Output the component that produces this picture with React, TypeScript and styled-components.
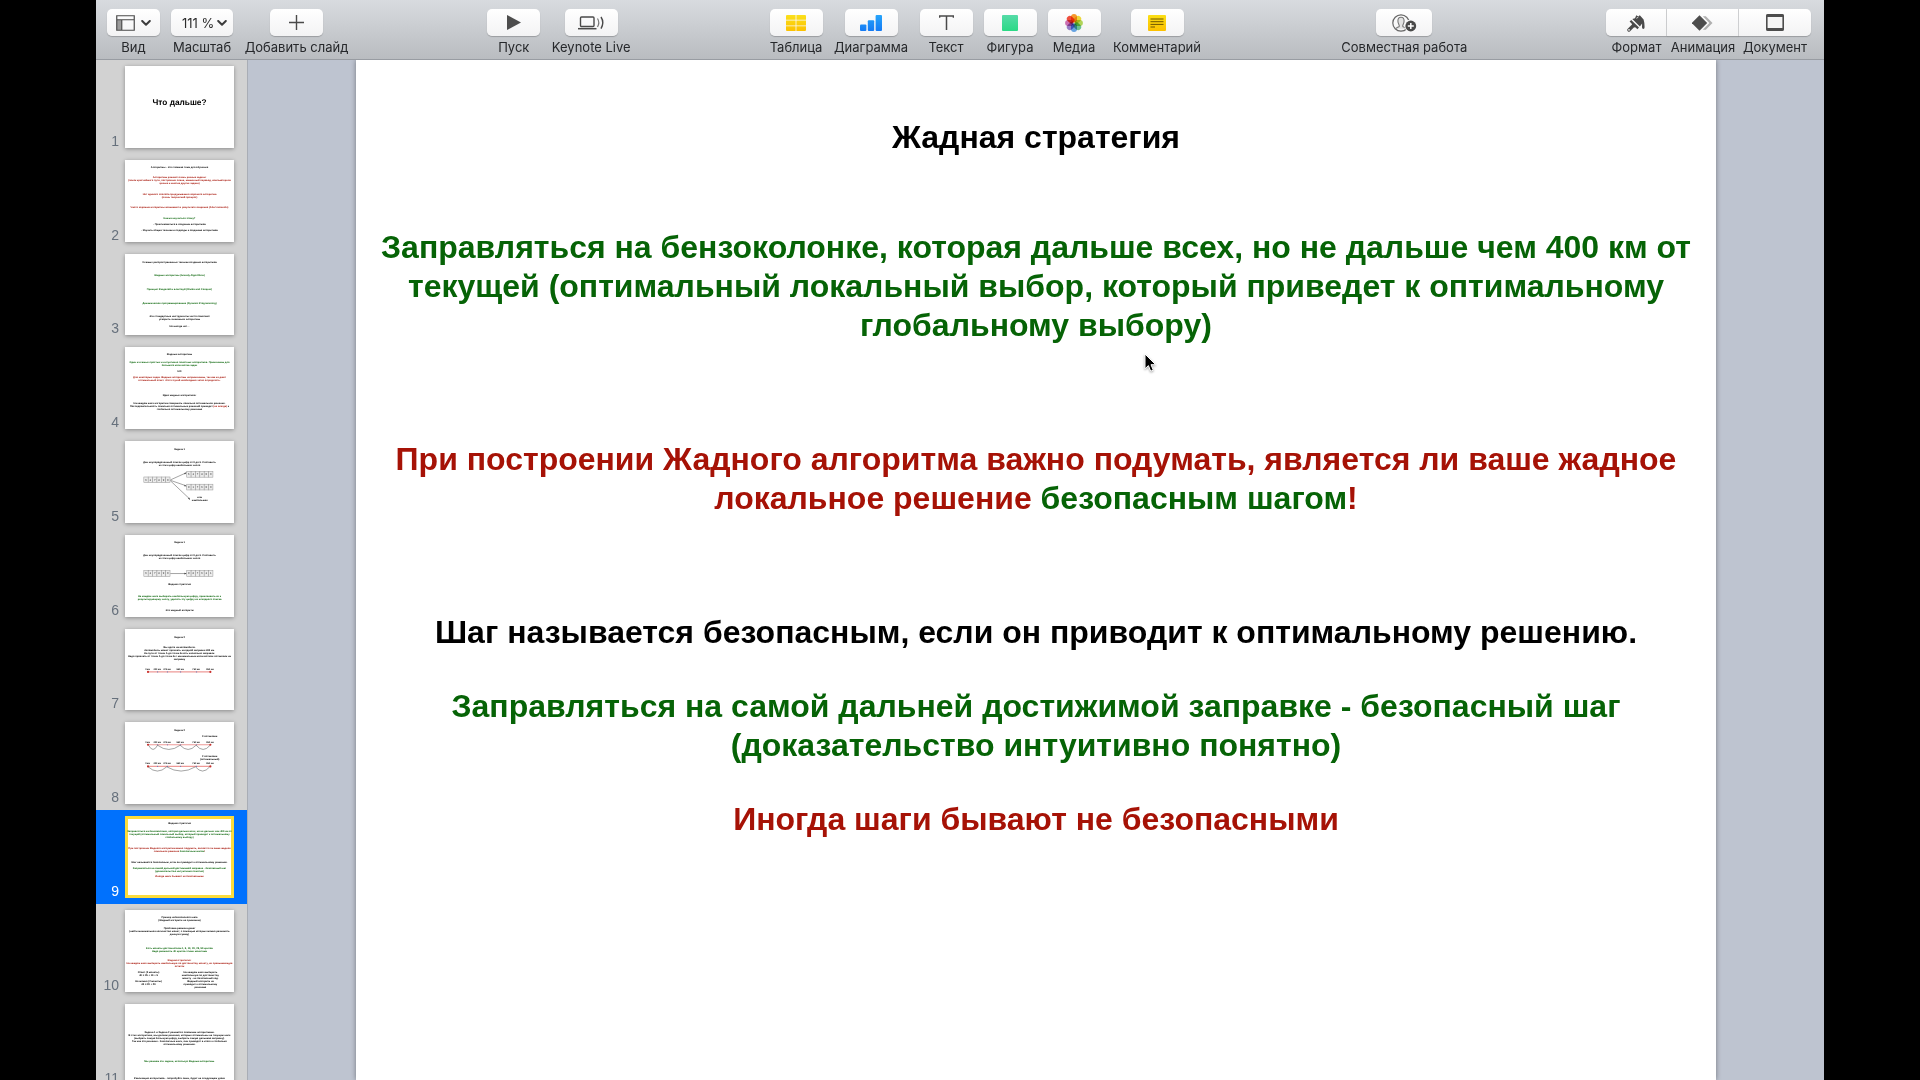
import React from 'react';
import styled, { createGlobalStyle, css } from 'styled-components';

const GREEN = '#066306';
const RED = '#a61206';
const BLACK = '#000000';
const SLIDE_FONT = '"Liberation Sans", Arial, sans-serif';
const UI_FONT = 'Inter, "Liberation Sans", sans-serif';

const GlobalStyle = createGlobalStyle`
  * { box-sizing: border-box; }
  body { margin: 0; background: #000; }
`;

const Screen = styled.div`
  height: 100vh;
  padding: 0 5%;
  background: #000;
  overflow: hidden;
`;

const Window = styled.div`
  height: 100%;
  display: flex;
  flex-direction: column;
  font-family: ${UI_FONT};
`;

/* ---------- toolbar ---------- */

const Toolbar = styled.header`
  flex: none;
  display: flex;
  justify-content: space-between;
  align-items: flex-start;
  height: 60px;
  padding: 9px 13px 0 11px;
  background: linear-gradient(#d8dbdf, #b9bcc0);
  border-bottom: 1px solid #989ca2;
`;

const ToolGroup = styled.div`
  display: flex;
  gap: 11px;
`;

const ToolItem = styled.div<{ $width: number }>`
  width: ${(p) => p.$width}px;
  display: flex;
  flex-direction: column;
  align-items: center;
  gap: 3px;
`;

const face = css`
  height: 27px;
  padding: 0;
  border: 0;
  border-radius: 5px;
  background: linear-gradient(#ffffff, #f3f3f4);
  box-shadow: 0 1px 1px rgba(0, 0, 0, 0.22);
  color: #4a4a4a;
`;

const ToolButton = styled.button<{ $width?: number }>`
  ${face}
  width: ${(p) => p.$width ?? 53}px;
  display: flex;
  align-items: center;
  justify-content: center;
  gap: 6px;
`;

const ToolLabel = styled.label`
  font-size: 13px;
  line-height: 16px;
  color: #26282b;
  white-space: nowrap;
`;

const ZoomFace = styled.div`
  position: relative;
  width: 62px;
  svg { position: absolute; right: 6px; top: 11px; pointer-events: none; }
`;

const ZoomSelect = styled.select`
  ${face}
  width: 100%;
  padding: 0 0 0 11px;
  appearance: none;
  font: 13px ${UI_FONT};
  color: #2c2c2c;
`;

const Segments = styled.div`
  display: flex;
`;

const Segment = styled(ToolButton)<{ $edge?: 'first' | 'last' }>`
  width: 100%;
  border-radius: ${(p) => (p.$edge === 'first' ? '5px 0 0 5px' : p.$edge === 'last' ? '0 5px 5px 0' : '0')};
  border-right: ${(p) => (p.$edge === 'last' ? '0' : '1px solid #d3d4d6')};
`;

const Chevron = () => (
  <svg width="10" height="6" viewBox="0 0 10 6" fill="none" stroke="#3c3c3c" strokeWidth="2" strokeLinecap="round" strokeLinejoin="round">
    <path d="M1.2 1 5 4.8 8.8 1" />
  </svg>
);

const ViewIcon = () => (
  <svg width="19" height="16" viewBox="0 0 19 16">
    <rect x="1" y="5" width="4.5" height="10" fill="#9b9b9b" />
    <path d="M.75 .75h17.5v14.5H.75zM.75 4.75h17.5M5.75 4.75v10.5" fill="none" stroke="#4a4a4a" strokeWidth="1.2" />
  </svg>
);

const PlusIcon = () => (
  <svg width="15" height="15" viewBox="0 0 15 15" stroke="#4a4a4a" strokeWidth="1.4">
    <path d="M7.5 0v15M0 7.5h15" />
  </svg>
);

const PlayIcon = () => (
  <svg width="14" height="15" viewBox="0 0 14 15">
    <path d="M0 0 14 7.5 0 15z" fill="#4d4d4d" />
  </svg>
);

const LiveIcon = () => (
  <svg width="27" height="14" viewBox="0 0 27 14" fill="none" stroke="#4a4a4a">
    <rect x="2.5" y="1" width="13.5" height="9.5" rx="1" strokeWidth="1.4" />
    <path d="M0 12.7h18.5" strokeWidth="1.5" />
    <path d="M19.5 2.5q2.600 4 0 8.500" strokeWidth="1.200" stroke="#777" />
    <path d="M23 1q3.6 5.6 0 11.6" strokeWidth="1.4" />
  </svg>
);

const TableIcon = () => (
  <svg width="20" height="16" viewBox="0 0 20 16">
    <defs>
      <linearGradient id="gold" x1="0" y1="0" x2="0" y2="16" gradientUnits="userSpaceOnUse">
        <stop offset="0" stopColor="#fbe01c" />
        <stop offset="1" stopColor="#fcc100" />
      </linearGradient>
    </defs>
    <path
      fill="url(#gold)"
      d="M1 0h8.6v4.8H0V1a1 1 0 0 1 1-1zM10.4 0H19a1 1 0 0 1 1 1v3.8h-9.6zM0 5.6h9.6v4.8H0zM10.4 5.6H20v4.8h-9.6zM0 11.2h9.6V16H1a1 1 0 0 1-1-1zM10.4 11.2H20V15a1 1 0 0 1-1 1h-8.6z"
    />
  </svg>
);

const ChartIcon = () => (
  <svg width="22" height="16" viewBox="0 0 22 16">
    <defs>
      <linearGradient id="blue" x1="0" y1="0" x2="0" y2="16" gradientUnits="userSpaceOnUse">
        <stop offset="0" stopColor="#27a5fb" />
        <stop offset="1" stopColor="#147af4" />
      </linearGradient>
    </defs>
    <g fill="url(#blue)">
      <rect y="9.5" width="6.4" height="6.5" rx="1" />
      <rect x="7.8" y="5.2" width="6.4" height="10.8" rx="1" />
      <rect x="15.6" width="6.4" height="16" rx="1" />
    </g>
  </svg>
);

const TextIcon = () => (
  <svg width="15" height="15" viewBox="0 0 15 15" fill="none" stroke="#4a4a4a" strokeWidth="1.5">
    <path d="M0 .9h15M7.5 .9V15M.6 .5v2.2M14.4 .5v2.2" />
  </svg>
);

const ShapeIcon = () => (
  <svg width="16" height="16" viewBox="0 0 16 16">
    <defs>
      <linearGradient id="mint" x1="0" y1="0" x2="0" y2="1">
        <stop offset="0" stopColor="#56dba8" />
        <stop offset="1" stopColor="#2bd985" />
      </linearGradient>
    </defs>
    <rect width="16" height="16" rx="1" fill="url(#mint)" />
  </svg>
);

const PETALS = ['#f99a2c', '#f0dc3c', '#b4d95a', '#6cc795', '#6aa9ea', '#9a80cc', '#d070b4', '#f2503e'];

const PhotosIcon = () => (
  <svg width="18" height="18" viewBox="0 0 18 18">
    {PETALS.map((color, i) => (
      <rect
        key={color}
        x="6"
        y="0.1"
        width="6"
        height="8.300"
        rx="3"
        fill={color}
        transform={`rotate(${i * 45} 9 9)`}
        style={{ mixBlendMode: 'multiply' }}
      />
    ))}
  </svg>
);

const CommentIcon = () => (
  <svg width="18" height="16" viewBox="0 0 18 16">
    <defs>
      <linearGradient id="note" x1="0" y1="0" x2="0" y2="1">
        <stop offset="0" stopColor="#fbdf16" />
        <stop offset="1" stopColor="#fcc000" />
      </linearGradient>
    </defs>
    <rect width="18" height="16" rx="1" fill="url(#note)" />
    <path d="M2.5 4h13M2.5 6.7h13M2.5 9.4h13M2.5 12h4.5" stroke="#6f5600" strokeWidth="1" />
  </svg>
);

const CollaborateIcon = () => (
  <svg width="25" height="18" viewBox="0 0 25 18" fill="none">
    <circle cx="9" cy="9" r="8.2" stroke="#666" strokeWidth="1.2" />
    <path
      d="M3.6 14.8c.6-1.4 3.3-1.6 3.7-2.6.3-.9-1.4-2.6-1.4-5.2C5.9 4.5 7.2 3.2 9 3.2s3.1 1.3 3.1 3.8c0 2.6-1.7 4.3-1.4 5.2.4 1 3.1 1.2 3.7 2.6"
      stroke="#777"
      strokeWidth="1.1"
      fill="#e3e3e3"
    />
    <circle cx="18.8" cy="12" r="6.4" fill="#f8f8f8" />
    <circle cx="18.8" cy="12" r="5.4" fill="#4a4a4a" />
    <path d="M18.8 9v6M15.8 12h6" stroke="#fff" strokeWidth="1.5" />
  </svg>
);

const FormatIcon = () => (
  <svg width="18" height="18" viewBox="0 0 18 18">
    <path d="M1.9 16 6.400 11.500" stroke="#4a4a4a" strokeWidth="3.200" strokeLinecap="round" />
    <circle cx="2" cy="15.900" r=".8" fill="#fff" />
    <path d="M2.600 7.600 4.200 6 12 13.600 10.400 15.200 8.600 13.400 6.800 13.200 5 11.400 5 9.900z" fill="#4a4a4a" />
    <path d="M5.300 5.100 8 4.200 9.300 1.200 11.300 2.400 12.800 1.200 16.600 5.400Q17.600 8.500 17.600 13.200 17.500 15 16.300 15T15 13.300L15.100 9.500 12.900 12.600z" fill="#4a4a4a" />
    <path d="M9.400 4.300 11.300 3.200" stroke="#f8f8f8" strokeWidth=".8" />
  </svg>
);

const AnimateIcon = () => (
  <svg width="21" height="16" viewBox="0 0 21 16">
    <path d="M10.8 1.2h3L20.5 8l-6.7 6.8h-3L17.4 8z" fill="#b0b0b0" />
    <path d="M7.5 .3 15.2 8 7.5 15.7-.2 8z" fill="#4d4d4d" />
  </svg>
);

const DocumentIcon = () => (
  <svg width="18" height="17" viewBox="0 0 18 17">
    <rect x=".8" y=".8" width="16.4" height="15.4" rx="1" fill="#f5f5f5" stroke="#4d4d4d" strokeWidth="1.6" />
    <path d="M.5 1.800h17M.5 15.200h17" stroke="#4d4d4d" strokeWidth="2.600" />
  </svg>
);

type ToolProps = { id: string; label: string; width?: number; face?: number; children: React.ReactNode };

const Tool = ({ id, label, width = 53, face: faceWidth, children }: ToolProps) => (
  <ToolItem $width={width}>
    <ToolButton id={id} type="button" $width={faceWidth}>{children}</ToolButton>
    <ToolLabel htmlFor={id}>{label}</ToolLabel>
  </ToolItem>
);

/* ---------- slide data ---------- */

type Run = { text: string; color?: string };
type Line = { y: number; text: string | Run[]; color?: string; x?: number; size?: number };

const lines = (color: string, start: number, texts: (string | Run[])[], x = 512): Line[] =>
  texts.map((text, i) => ({ y: start + i * 29, text, color, x }));

const AXIS = [
  { x: 212, t: '0 км' },
  { x: 302, t: '200 км' },
  { x: 395, t: '375 км' },
  { x: 518, t: '550 км' },
  { x: 668, t: '750 км' },
  { x: 798, t: '950 км' },
];

const Cells = ({ x, y, digits }: { x: number; y: number; digits: string }) => (
  <g>
    {digits.split('').map((d, i) => (
      <g key={i}>
        <rect x={x + i * 41} y={y} width="41" height="54" fill="#ececec" stroke="#999" strokeWidth="5" />
        <text x={x + i * 41 + 20} y={y + 36} textAnchor="middle" fontSize="26" fill="#333">{d}</text>
      </g>
    ))}
  </g>
);

const Arrow = ({ d, tip }: { d: string; tip: string }) => (
  <g>
    <path d={d} stroke="#555" strokeWidth="5" fill="none" />
    <path d={tip} fill="#444" />
  </g>
);

const Axis = ({ y, arcs = [] }: { y: number; arcs?: number[] }) => (
  <g>
    <path d={`M221 ${y}H800`} stroke="#ee9a97" strokeWidth="11" />
    {AXIS.map((a, i) => (
      <g key={a.t}>
        <text x={a.x} y={y - 18} textAnchor="middle" fontSize="22" fontWeight="bold">{a.t}</text>
        <circle cx={a.x + 4} cy={y} r={i === 0 || i === 5 ? 10 : 6} fill={i === 0 || i === 5 ? '#c9302c' : '#7d7fb5'} />
      </g>
    ))}
    {arcs.slice(1).map((to, i) => (
      <path key={to} d={`M${arcs[i]} ${y + 4}Q${(arcs[i] + to) / 2} ${y + 84} ${to} ${y + 4}`} stroke="#555" strokeWidth="5" fill="none" />
    ))}
  </g>
);

type Slide = { lines: Line[]; art?: React.ReactNode };

const CURRENT: { gap: number; color: string; rows: Run[][] }[] = [
  { gap: 0, color: BLACK, rows: [[{ text: 'Жадная стратегия' }]] },
  {
    gap: 71,
    color: GREEN,
    rows: [
      [{ text: 'Заправляться на бензоколонке, которая дальше всех, но не дальше чем 400 км от' }],
      [{ text: 'текущей (оптимальный локальный выбор, который приведет к оптимальному' }],
      [{ text: 'глобальному выбору)' }],
    ],
  },
  {
    gap: 95,
    color: RED,
    rows: [
      [{ text: 'При построении Жадного алгоритма важно подумать, является ли ваше жадное' }],
      [{ text: 'локальное решение ' }, { text: 'безопасным шагом', color: GREEN }, { text: '!' }],
    ],
  },
  { gap: 95, color: BLACK, rows: [[{ text: 'Шаг называется безопасным, если он приводит к оптимальному решению.' }]] },
  {
    gap: 35,
    color: GREEN,
    rows: [
      [{ text: 'Заправляться на самой дальней достижимой заправке - безопасный шаг' }],
      [{ text: '(доказательство интуитивно понятно)' }],
    ],
  },
  { gap: 35, color: RED, rows: [[{ text: 'Иногда шаги бывают не безопасными' }]] },
];

const SLIDES: Slide[] = [
  { lines: [{ y: 368, text: 'Что дальше?', size: 78 }] },
  {
    lines: [
      ...lines(BLACK, 77, ['Алгоритмы - это сложная тема для обучения']),
      ...lines(RED, 172, [
        'Алгоритмы решают очень разные задачи:',
        '(поиск кратчайшего пути, построение плана, машинный перевод, компьютерное',
        'зрение и многие другие задачи)',
      ]),
      ...lines(RED, 327, ['Нет единого способа придумывания хорошего алгоритма', '(очень творческий процесс)']),
      ...lines(RED, 453, ['Часто хорошие алгоритмы возникают в результате озарения (Aha! moments)']),
      ...lines(GREEN, 551, ['Как же научиться этому?']),
      ...lines(BLACK, 608, ['- Практиковаться в создании алгоритмов']),
      ...lines(BLACK, 665, ['- Изучать общие техники и подходы к созданию алгоритмов']),
    ],
  },
  {
    lines: [
      ...lines(BLACK, 84, ['3 самых распространенных техники создания алгоритмов']),
      ...lines(GREEN, 210, ['Жадные алгоритмы (Greedy Algorithms)']),
      ...lines(GREEN, 337, ['Принцип Разделяй и властвуй (Divide and Conquer)']),
      ...lines(GREEN, 466, ['Динамическое программирование (Dynamic Programming)']),
      ...lines(BLACK, 589, ['Эти стандартные инструменты часто помогают', 'ускорить «наивные» алгоритмы']),
      ...lines(BLACK, 687, ['Но иногда нет…']),
    ],
  },
  {
    lines: [
      ...lines(BLACK, 74, ['Жадные алгоритмы']),
      ...lines(GREEN, 150, ['Один из самых простых и интуитивно понятных алгоритмов. Применимы для', 'большого количества задач']),
      ...lines(BLACK, 232, ['НО']),
      ...lines(RED, 292, [
        'Для некоторых задач Жадные алгоритмы неприменимы, так как не дают',
        'оптимальный ответ. Этот случай необходимо четко определять.',
      ]),
      ...lines(BLACK, 460, ['Идея жадных алгоритмов:']),
      ...lines(BLACK, 536, [
        'На каждом шаге алгоритма совершать локально оптимальное решение.',
        [
          { text: 'Последовательность локально оптимальных решений приведет ' },
          { text: '(не всегда)', color: RED },
          { text: ' к' },
        ],
        'глобально оптимальному решению',
      ]),
    ],
  },
  {
    lines: [
      ...lines(BLACK, 87, ['Задача 1']),
      ...lines(BLACK, 204, ['Дан неупорядоченный список цифр от 0 до 9. Составить', 'из этих цифр наибольшее число']),
      ...lines(BLACK, 537, ['или', 'наибольшее'], 702),
    ],
    art: (
      <g>
        <Cells x={177} y={338} digits="537890" />
        <Cells x={580} y={286} digits="537890" />
        <Cells x={580} y={406} digits="917590" />
        <Arrow d="M428 365 572 300" tip="M580 296 556 300 562 314z" />
        <Arrow d="M428 370 572 420" tip="M580 426 556 424 560 410z" />
        <Arrow d="M428 375 608 545" tip="M614 552 592 542 602 530z" />
      </g>
    ),
  },
  {
    lines: [
      ...lines(BLACK, 74, ['Задача 1']),
      ...lines(BLACK, 201, ['Дан неупорядоченный список цифр от 0 до 9. Составить', 'из этих цифр наибольшее число']),
      ...lines(BLACK, 469, ['Жадная стратегия']),
      ...lines(GREEN, 580, [
        'На каждом шаге выбирать наибольшую цифру, приклеивать ее к',
        'результирующему числу, удалять эту цифру из исходного списка',
      ]),
      ...lines(BLACK, 712, ['Это жадный алгоритм']),
    ],
    art: (
      <g>
        <Cells x={177} y={335} digits="537890" />
        <Cells x={580} y={335} digits="987531" />
        <Arrow d="M426 362H570" tip="M580 362 558 354V370z" />
      </g>
    ),
  },
  {
    lines: [
      ...lines(BLACK, 84, ['Задача 2']),
      ...lines(BLACK, 178, [
        'Вы едете на автомобиле.',
        'Автомобиль может проехать на одной заправке 400 км.',
        'На пути от точки А до точки Б есть несколько заправок.',
        'Надо проехать от точки А до точки Б с минимальным количеством остановок на',
        'заправку',
      ]),
    ],
    art: <Axis y={403} />,
  },
  {
    lines: [
      ...lines(BLACK, 87, ['Задача 2']),
      ...lines(BLACK, 138, ['3 остановки'], 796),
      ...lines(BLACK, 327, ['2 остановки', '(оптимальный)'], 796),
    ],
    art: (
      <g>
        <Axis y={214} arcs={[221, 306, 518, 668, 800]} />
        <Axis y={417} arcs={[217, 392, 662, 796]} />
      </g>
    ),
  },
  {
    lines: CURRENT.flatMap((block, i) => lines(block.color, [74, 153, 313, 438, 495, 577][i], block.rows)),
  },
  {
    lines: [
      ...lines(BLACK, 77, ['Пример небезопасного шага', '(Жадный алгоритм не применим)']),
      ...lines(BLACK, 175, [
        'Проблема размена денег',
        '(найти минимальное количество монет, с помощью которых можно разменять',
        'данную сумму)',
      ]),
      ...lines(GREEN, 368, ['Есть монеты достоинством 1, 5, 10, 20, 25, 50 центов', 'Надо разменять 40 центов этими монетами']),
      ...lines(RED, 476, [
        'Жадная стратегия:',
        'На каждом шаге выбирать наибольшую по достоинству монету, не превышающую',
        'остаток',
      ]),
      ...lines(BLACK, 592, ['Ответ (3 монеты)', '40 = 25 + 10 + 5'], 221),
      ...lines(BLACK, 678, ['Но можно (2 монеты)', '40 = 20 + 20'], 221),
      ...lines(
        BLACK,
        592,
        [
          'На каждом шаге выбирать',
          'наибольшую по достоинству',
          'монету - не безопасный ход.',
          'Жадный алгоритм не',
          'приводит к оптимальному',
          'решению',
        ],
        708,
      ),
    ],
  },
  {
    lines: [
      ...lines(BLACK, 270, [
        'Задача 1 и Задача 2 решаются похожими алгоритмами.',
        'В этих алгоритмах, мы делаем решения, которые оптимальны на текущем шаге',
        '(выбрать самую большую цифру, выбрать самую дальнюю заправку).',
        'Так как это решение - безопасные шаги, они приводят в итоге к глобально',
        'оптимальному решению.',
      ]),
      ...lines(GREEN, 542, ['Мы решаем эти задачи, используя Жадные алгоритмы.']),
      ...lines(BLACK, 700, ['Реализация алгоритмов - попробуйте сами, будет на следующем уроке']),
    ],
  },
];

/* ---------- navigator ---------- */

const Body = styled.div`
  flex: 1;
  min-height: 0;
  display: flex;
`;

const Navigator = styled.nav`
  flex: none;
  width: 152px;
  overflow: hidden;
  background: #d2d2d2;
  border-right: 1px solid #a9adb5;
`;

const NavList = styled.ol`
  margin: 0;
  padding: 0;
  list-style: none;
`;

const NavRow = styled.button<{ $current: boolean }>`
  width: 100%;
  display: flex;
  align-items: flex-end;
  justify-content: flex-end;
  gap: 6px;
  padding: 6px 13px 6px 0;
  border: 0;
  background: ${(p) => (p.$current ? '#0071fd' : 'transparent')};
  color: ${(p) => (p.$current ? '#ffffff' : '#66707c')};
  font: 14px/14px ${SLIDE_FONT};
`;

const Thumb = styled.svg<{ $current: boolean }>`
  display: block;
  width: 109px;
  aspect-ratio: 4 / 3;
  background: #fff;
  font-family: ${SLIDE_FONT};
  text-rendering: geometricPrecision;
  box-shadow: ${(p) => (p.$current ? 'inset 0 0 0 3px #fbdc3c' : '0 1px 4px rgba(0, 0, 0, 0.35)')};
`;

const Thumbnail = ({ slide, current }: { slide: Slide; current: boolean }) => (
  <Thumb viewBox="0 0 1024 768" $current={current}>
    {slide.art}
    {slide.lines.map((line, i) => (
      <text key={i} x={line.x ?? 512} y={line.y} textAnchor="middle" fontWeight="bold" fontSize={line.size ?? 24} fill={line.color ?? BLACK}>
        {typeof line.text === 'string'
          ? line.text
          : line.text.map((run, j) => (
              <tspan key={j} fill={run.color}>{run.text}</tspan>
            ))}
      </text>
    ))}
  </Thumb>
);

/* ---------- slide canvas ---------- */

const Canvas = styled.main`
  flex: 1;
  min-width: 0;
  display: flex;
  justify-content: center;
  background: #bec4d0;
`;

const SlidePage = styled.article`
  position: relative;
  height: 100%;
  aspect-ratio: 4 / 3;
  padding-top: 58px;
  background: #fff;
  box-shadow: 0 0 5px rgba(0, 0, 0, 0.4);
  clip-path: inset(0 -8px);
  font: bold 32px/39px ${SLIDE_FONT};
  text-align: center;
  white-space: nowrap;
`;

const SlideText = styled.p<{ $gap: number; $color: string }>`
  margin: ${(p) => p.$gap}px 0 0;
  color: ${(p) => p.$color};
`;

const Colored = styled.span<{ $color?: string }>`
  color: ${(p) => p.$color ?? 'inherit'};
`;

const Pointer = styled.svg`
  position: absolute;
  left: 788px;
  top: 293px;
  filter: drop-shadow(0 1px 1px rgba(0, 0, 0, 0.35));
`;

export default function App() {
  return (
    <Screen>
      <GlobalStyle />
      <Window>
        <Toolbar>
          <ToolGroup>
            <Tool id="view" label="Вид"><ViewIcon /><Chevron /></Tool>
            <ToolItem $width={62}>
              <ZoomFace>
                <ZoomSelect id="zoom" defaultValue="111">
                  <option value="111">111 %</option>
                </ZoomSelect>
                <Chevron />
              </ZoomFace>
              <ToolLabel htmlFor="zoom">Масштаб</ToolLabel>
            </ToolItem>
            <Tool id="add" label="Добавить слайд" width={105}><PlusIcon /></Tool>
          </ToolGroup>
          <ToolGroup>
            <Tool id="play" label="Пуск"><PlayIcon /></Tool>
            <Tool id="live" label="Keynote Live" width={80}><LiveIcon /></Tool>
          </ToolGroup>
          <ToolGroup>
            <Tool id="table" label="Таблица"><TableIcon /></Tool>
            <Tool id="chart" label="Диаграмма" width={75}><ChartIcon /></Tool>
            <Tool id="text" label="Текст"><TextIcon /></Tool>
            <Tool id="shape" label="Фигура"><ShapeIcon /></Tool>
            <Tool id="media" label="Медиа"><PhotosIcon /></Tool>
            <Tool id="comment" label="Комментарий" width={91}><CommentIcon /></Tool>
          </ToolGroup>
          <ToolGroup>
            <Tool id="share" label="Совместная работа" width={127} face={56}><CollaborateIcon /></Tool>
          </ToolGroup>
          <Segments>
            <ToolItem $width={61}>
              <Segment id="format" type="button" $edge="first"><FormatIcon /></Segment>
              <ToolLabel htmlFor="format">Формат</ToolLabel>
            </ToolItem>
            <ToolItem $width={72}>
              <Segment id="animate" type="button"><AnimateIcon /></Segment>
              <ToolLabel htmlFor="animate">Анимация</ToolLabel>
            </ToolItem>
            <ToolItem $width={72}>
              <Segment id="document" type="button" $edge="last"><DocumentIcon /></Segment>
              <ToolLabel htmlFor="document">Документ</ToolLabel>
            </ToolItem>
          </Segments>
        </Toolbar>
        <Body>
          <Navigator>
            <NavList>
              {SLIDES.map((slide, i) => (
                <li key={i}>
                  <NavRow type="button" $current={i === 8} aria-current={i === 8}>
                    {i + 1}
                    <Thumbnail slide={slide} current={i === 8} />
                  </NavRow>
                </li>
              ))}
            </NavList>
          </Navigator>
          <Canvas>
            <SlidePage>
              {CURRENT.map((block, i) => (
                <SlideText key={i} $gap={block.gap} $color={block.color}>
                  {block.rows.map((row, r) => (
                    <React.Fragment key={r}>
                      {r > 0 && <br />}
                      {row.map((run, k) => (
                        <Colored key={k} $color={run.color}>{run.text}</Colored>
                      ))}
                    </React.Fragment>
                  ))}
                </SlideText>
              ))}
              <Pointer width="13" height="20" viewBox="0 0 13 20">
                <path d="M1 1v14.8l3.4-3.2 2.3 5.6 2.6-1.1-2.3-5.4h4.7z" fill="#000" stroke="#fff" strokeWidth="1" />
              </Pointer>
            </SlidePage>
          </Canvas>
        </Body>
      </Window>
    </Screen>
  );
}
